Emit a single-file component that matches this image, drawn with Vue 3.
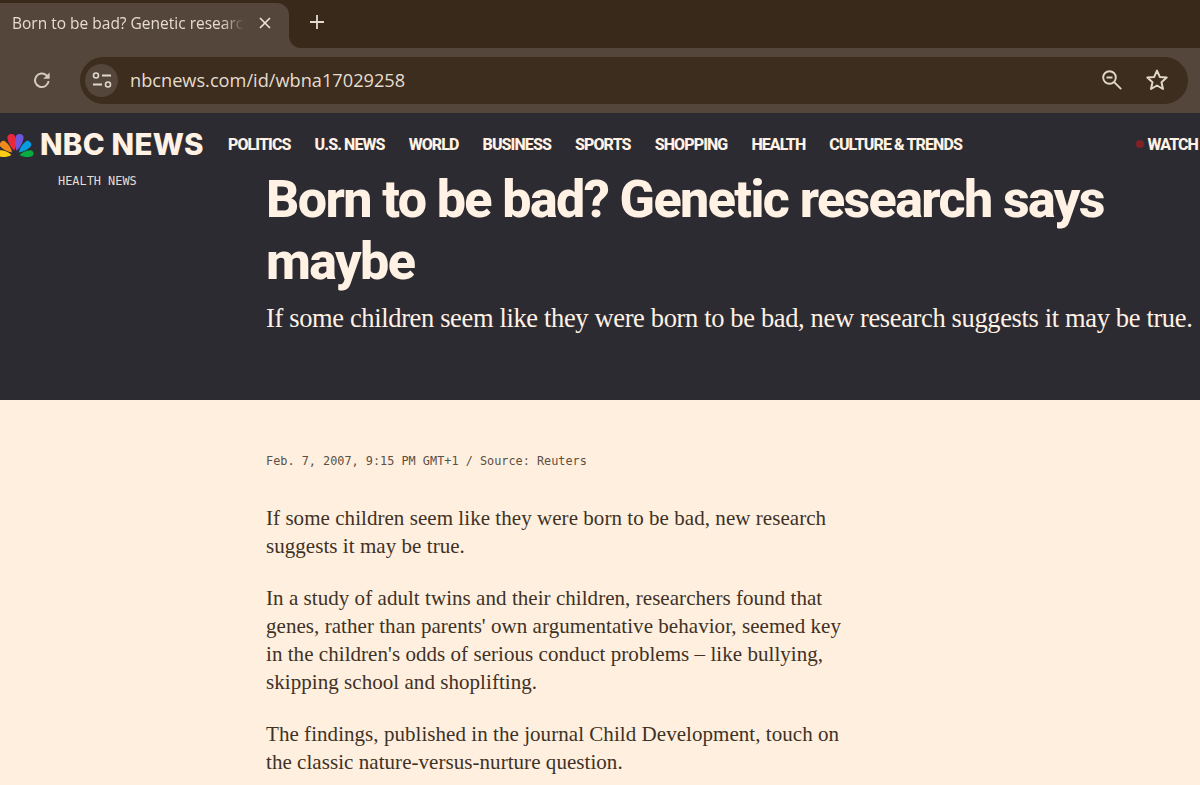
<script setup>
const navItems = ['POLITICS', 'U.S. NEWS', 'WORLD', 'BUSINESS', 'SPORTS', 'SHOPPING', 'HEALTH', 'CULTURE & TRENDS']

const paragraphs = [
  ['If some children seem like they were born to be bad, new research', 'suggests it may be true.'],
  [
    'In a study of adult twins and their children, researchers found that',
    "genes, rather than parents' own argumentative behavior, seemed key",
    "in the children's odds of serious conduct problems – like bullying,",
    'skipping school and shoplifting.',
  ],
  ['The findings, published in the journal Child Development, touch on', 'the classic nature-versus-nurture question.'],
]

const feathers = [
  { color: '#fccc12', rotate: -82, scale: 0.82 },
  { color: '#ef8a1d', rotate: -48, scale: 0.9 },
  { color: '#e9283c', rotate: -13, scale: 1 },
  { color: '#6e55dc', rotate: 13, scale: 1 },
  { color: '#069de0', rotate: 48, scale: 0.9 },
  { color: '#05ac3f', rotate: 82, scale: 0.82 },
]
</script>

<template>
  <div class="page">
    <header class="chrome">
      <div class="tab-strip">
        <div class="tab">
          <span class="tab-title">Born to be bad? Genetic research says maybe</span>
          <svg class="tab-close" width="14" height="14" viewBox="0 0 14 14">
            <path d="M2 2l10 10M12 2L2 12" stroke="#ece3d8" stroke-width="1.7" fill="none" />
          </svg>
        </div>
        <div class="strip-rest">
          <svg width="16" height="16" viewBox="0 0 16 16">
            <path d="M8 1v14M1 8h14" stroke="#e4dbd0" stroke-width="1.8" fill="none" />
          </svg>
        </div>
      </div>

      <div class="toolbar">
        <svg class="reload" width="20" height="20" viewBox="0 0 20 20">
          <path d="M16.6 11a6.8 6.8 0 1 1-2-5.6L16.4 7.2" stroke="#d4cabd" stroke-width="2" fill="none" />
          <path d="M17.6 2.4v6.4h-6.4z" fill="#d4cabd" />
        </svg>
        <div class="omnibox">
          <span class="site-info">
            <svg width="22" height="18" viewBox="0 0 22 18">
              <circle cx="5" cy="4.5" r="2.5" stroke="#e0d7cb" stroke-width="1.6" fill="none" />
              <path d="M11 4.5h9M2 13.5h9" stroke="#e0d7cb" stroke-width="1.8" fill="none" />
              <circle cx="17" cy="13.5" r="2.5" stroke="#e0d7cb" stroke-width="1.6" fill="none" />
            </svg>
          </span>
          <span class="url">nbcnews.com/id/wbna17029258</span>
          <svg class="zoom-icon" width="22" height="22" viewBox="0 0 22 22">
            <circle cx="8.5" cy="8.5" r="6.3" stroke="#e0d7cb" stroke-width="1.9" fill="none" />
            <path d="M5.5 8.5h6M13.2 13.2l7 7" stroke="#e0d7cb" stroke-width="1.9" fill="none" />
          </svg>
          <svg class="star-icon" width="24" height="24" viewBox="0 0 24 24">
            <path d="M12 2.6l2.8 6.3 6.9.7-5.2 4.6 1.5 6.8-6-3.5-6 3.5 1.5-6.8-5.2-4.6 6.9-.7z" stroke="#e0d7cb" stroke-width="2" stroke-linejoin="round" fill="none" />
          </svg>
        </div>
      </div>
    </header>

    <section class="hero">
      <nav class="site-nav">
        <div class="logo">
          <svg class="peacock" width="36" height="25" viewBox="-16.5 -23.5 36 25">
            <path
              v-for="f in feathers"
              :key="f.color"
              d="M0-5C-3-9-4-13-4-18a4 4 0 0 1 8 0C4-13 3-9 0-5z"
              :fill="f.color"
              :transform="`rotate(${f.rotate}) scale(${f.scale})`"
            />
          </svg>
          <span class="logo-text">NBC NEWS</span>
        </div>
        <a v-for="item in navItems" :key="item" class="nav-link">{{ item }}</a>
        <span class="watch"><i class="live-dot"></i>WATCH</span>
      </nav>

      <div class="hero-body">
        <div class="eyebrow">HEALTH NEWS</div>
        <div class="hero-text">
          <h1>Born to be bad? Genetic research says maybe</h1>
          <p class="dek">If some children seem like they were born to be bad, new research suggests it may be true.</p>
        </div>
      </div>
    </section>

    <main class="article">
      <div class="dateline">Feb. 7, 2007, 9:15 PM GMT+1 / Source: Reuters</div>
      <p v-for="(lines, i) in paragraphs" :key="i" class="para">
        <span v-for="line in lines" :key="line" class="line">{{ line }}</span>
      </p>
    </main>
  </div>
</template>

<style>
html,
body {
  margin: 0;
  overflow: hidden;
  background: #ffefdf;
}
</style>

<style scoped>
.page {
  width: 1200px;
  height: 785px;
  overflow: hidden;
  background: #ffefdf;
}

.chrome {
  height: 113px;
  font-family: "Roboto", "Liberation Sans", sans-serif;
}

.tab-strip {
  display: flex;
  height: 48px;
  background: linear-gradient(#38291b 0 50%, #54463a 50%);
}

.tab {
  display: flex;
  align-items: center;
  width: 289px;
  box-sizing: border-box;
  margin-top: 3px;
  padding: 0 17px 5px 12px;
  background: #54463a;
  border-radius: 0 12px 0 0;
}

.tab-title {
  width: 234px;
  overflow: hidden;
  white-space: nowrap;
  font-family: "Open Sans", sans-serif;
  font-size: 15.5px;
  color: #e6dccf;
  -webkit-mask-image: linear-gradient(to right, #000 90%, transparent);
  mask-image: linear-gradient(to right, #000 90%, transparent);
}

.tab-close {
  margin-left: 13px;
}

.strip-rest {
  flex: 1;
  display: flex;
  align-items: center;
  padding: 0 0 5px 20px;
  background: #38291b;
  border-radius: 0 0 0 12px;
}

.toolbar {
  display: flex;
  align-items: center;
  height: 65px;
  padding-bottom: 1px;
  box-sizing: border-box;
  background: #54463a;
}

.reload {
  margin-left: 32px;
}

.omnibox {
  display: flex;
  align-items: center;
  width: 1108px;
  height: 47px;
  margin-left: 28px;
  padding: 0 7px 0 5px;
  box-sizing: border-box;
  background: #3c2d1e;
  border-radius: 24px;
}

.site-info {
  display: flex;
  align-items: center;
  justify-content: center;
  width: 33px;
  height: 33px;
  border-radius: 50%;
  background: #54463a;
}

.url {
  flex: 1;
  margin-left: 12px;
  font-family: "Open Sans", sans-serif;
  font-size: 18.2px;
  color: #e6dccf;
}

.star-icon {
  margin: 0 12px 0 22px;
}

.hero {
  height: 287px;
  background: #2c2b32;
  color: #fff1e3;
}

.site-nav {
  display: flex;
  align-items: center;
  height: 62px;
  padding-right: 2px;
  white-space: nowrap;
  overflow: hidden;
}

.logo {
  display: flex;
  align-items: center;
  width: 228px;
  flex-shrink: 0;
}

.peacock {
  flex-shrink: 0;
  margin-left: -1px;
}

.logo-text {
  margin-left: 5px;
  font-family: "Inter", sans-serif;
  font-weight: 800;
  font-size: 29.5px;
  letter-spacing: 0.25px;
}

.nav-link {
  margin-right: 24px;
  font-family: "Roboto", sans-serif;
  font-weight: 800;
  font-size: 16px;
  letter-spacing: -0.9px;
}

.watch {
  display: flex;
  align-items: center;
  margin-left: auto;
  font-family: "Roboto", sans-serif;
  font-weight: 800;
  font-size: 16px;
  letter-spacing: -0.9px;
}

.live-dot {
  width: 8px;
  height: 8px;
  margin-right: 3px;
  border-radius: 50%;
  background: #7f2125;
}

.hero-body {
  display: flex;
}

.eyebrow {
  width: 266px;
  flex-shrink: 0;
  box-sizing: border-box;
  padding: 0 0 0 58px;
  font-family: "DejaVu Sans Mono", monospace;
  font-size: 11.9px;
  line-height: 12px;
  color: #e6ddd2;
}

.hero-text {
  margin-top: -6px;
}

h1 {
  width: 900px;
  margin: 0;
  font-family: "Roboto", sans-serif;
  font-weight: 800;
  font-stretch: 88%;
  font-size: 52px;
  line-height: 62px;
  letter-spacing: -1.61px;
}

.dek {
  margin: 9px 0 0;
  white-space: nowrap;
  font-family: "Liberation Serif", serif;
  font-size: 26.5px;
  letter-spacing: -0.36px;
  line-height: 32px;
}

.article {
  padding: 54px 0 0 266px;
  color: #3e3226;
}

.dateline {
  font-family: "DejaVu Sans Mono", monospace;
  font-size: 11.85px;
  line-height: 14px;
  color: #5b5044;
}

.para {
  margin: 0 0 24px;
  font-family: "Liberation Serif", serif;
  font-size: 21px;
  letter-spacing: 0.05px;
  line-height: 28px;
}

.dateline + .para {
  margin-top: 36px;
}

.line {
  display: block;
  white-space: nowrap;
}
</style>
